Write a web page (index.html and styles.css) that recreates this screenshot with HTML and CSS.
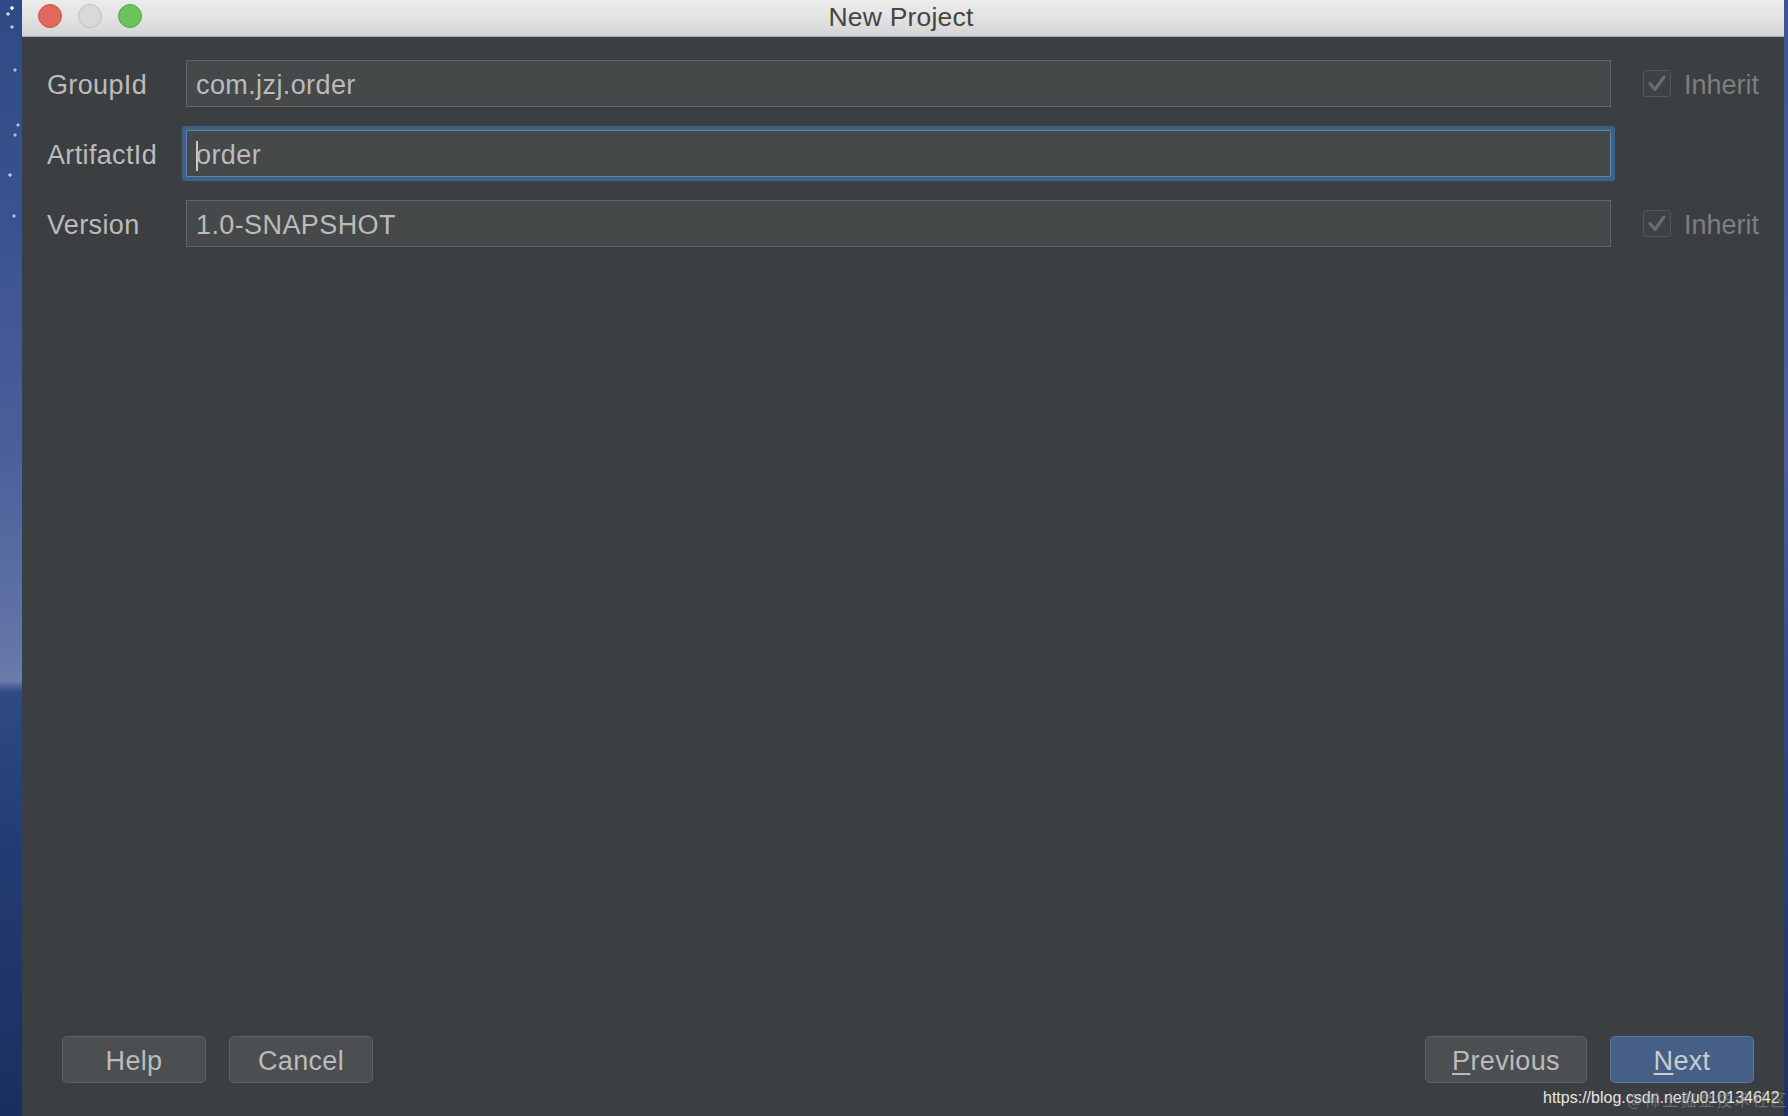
FILE: index.html
```html
<!DOCTYPE html>
<html>
<head>
<meta charset="utf-8">
<title>New Project</title>
<link rel="stylesheet" href="styles.css">
</head>
<body>
<div class="desktop">
  <div class="strip strip-left"></div>
  <div class="window">
    <div class="titlebar">
      <div class="lights">
        <span class="light red"></span>
        <span class="light gray"></span>
        <span class="light green"></span>
      </div>
      <div class="title">New Project</div>
    </div>
    <div class="content">
      <div class="form">
        <label class="label">GroupId</label>
        <div class="field">com.jzj.order</div>
        <div class="inherit">
          <span class="check"><svg viewBox="0 0 28 27" width="28" height="27"><path d="M7 13.5 L12 19.5 L21 7" fill="none" stroke="#6b6e70" stroke-width="3" stroke-linecap="round" stroke-linejoin="round"/></svg></span>
          <span class="inherit-text">Inherit</span>
        </div>

        <label class="label">ArtifactId</label>
        <div class="field focused"><span class="caret"></span>order</div>
        <div class="inherit empty"></div>

        <label class="label">Version</label>
        <div class="field">1.0-SNAPSHOT</div>
        <div class="inherit">
          <span class="check"><svg viewBox="0 0 28 27" width="28" height="27"><path d="M7 13.5 L12 19.5 L21 7" fill="none" stroke="#6b6e70" stroke-width="3" stroke-linecap="round" stroke-linejoin="round"/></svg></span>
          <span class="inherit-text">Inherit</span>
        </div>
      </div>

      <div class="footer">
        <div class="btn-group">
          <button class="btn">Help</button>
          <button class="btn">Cancel</button>
        </div>
        <div class="btn-group">
          <button class="btn wide"><u>P</u>revious</button>
          <button class="btn primary"><u>N</u>ext</button>
        </div>
      </div>
    </div>
  </div>
  <div class="strip strip-right"></div>
</div>
<div class="watermark">
  <span class="wm-url">https://blog.csdn.net/u010134642</span>
  <span class="wm-cn">@稀土掘金技术社区</span>
</div>
</body>
</html>
```

FILE: styles.css
```css
html, body {
  margin: 0;
  padding: 0;
  width: 1788px;
  height: 1116px;
  overflow: hidden;
  background: #1d2f5c;
  font-family: "Liberation Sans", Arial, sans-serif;
}

.desktop {
  display: flex;
  width: 1788px;
  height: 1116px;
}

.strip {
  flex: none;
}

.strip-left {
  width: 22px;
  background:
    radial-gradient(circle at 12px 8px, rgba(255,255,255,0.9) 0 1.5px, transparent 2px),
    radial-gradient(circle at 8px 14px, rgba(255,255,255,0.8) 0 1.3px, transparent 2px),
    radial-gradient(circle at 12px 27px, rgba(255,255,255,0.7) 0 1.2px, transparent 2px),
    radial-gradient(circle at 15px 70px, rgba(255,255,255,0.6) 0 1.2px, transparent 2px),
    radial-gradient(circle at 18px 125px, rgba(255,255,255,0.6) 0 1.2px, transparent 2px),
    radial-gradient(circle at 15px 135px, rgba(255,255,255,0.6) 0 1.2px, transparent 2px),
    radial-gradient(circle at 10px 175px, rgba(255,255,255,0.7) 0 1.3px, transparent 2px),
    radial-gradient(circle at 14px 216px, rgba(255,255,255,0.6) 0 1.2px, transparent 2px),
    linear-gradient(to bottom, #2f4a84 0%, #3a5390 20%, #4a5f9a 40%, #6375a6 58%, #6c7dab 61%, #2f4a84 62%, #233d74 75%, #1b2f5e 100%);
}

.strip-right {
  width: 4px;
  background: linear-gradient(to bottom, #3a5590 0%, #4a5f98 40%, #2a4478 70%, #1e3260 100%);
}

.window {
  flex: 1;
  display: flex;
  flex-direction: column;
  background: #3c3f41;
  min-width: 0;
}

.titlebar {
  flex: none;
  height: 36px;
  position: relative;
  display: flex;
  align-items: center;
  justify-content: center;
  background: linear-gradient(to bottom, #ececec 0%, #e3e3e3 50%, #d4d4d4 100%);
  border-bottom: 1px solid #a9a9a9;
}

.lights {
  position: absolute;
  left: 16px;
  top: 4px;
  display: flex;
  gap: 16px;
}

.light {
  width: 22px;
  height: 22px;
  border-radius: 50%;
  display: block;
}

.light.red {
  background: #e2685c;
  border: 1px solid #cc5446;
}

.light.gray {
  background: #d9d9d9;
  border: 1px solid #c0c0c0;
}

.light.green {
  background: #6cc25c;
  border: 1px solid #55a946;
}

.title {
  font-size: 26.5px;
  color: #454545;
  margin-left: -4px;
  margin-top: -2px;
  line-height: 30px;
  letter-spacing: 0.2px;
}

.content {
  flex: 1;
  display: flex;
  flex-direction: column;
  padding: 23px 25px 33px 25px;
}

.form {
  display: grid;
  grid-template-columns: 139px 1fr auto;
  grid-auto-rows: 47px;
  row-gap: 23px;
  align-items: center;
}

.label {
  font-size: 27px;
  color: #bbbbbb;
  line-height: 47px;
  padding-top: 4px;
  letter-spacing: 0.35px;
}

.field {
  height: 47px;
  box-sizing: border-box;
  border: 1px solid #646464;
  background: #45494a;
  color: #bbbbbb;
  font-size: 27px;
  line-height: 45px;
  padding-left: 9px;
  padding-top: 4px;
  display: flex;
  align-items: center;
  letter-spacing: 0.4px;
}

.field.focused {
  border: 1px solid #5b84b0;
  box-shadow: 0 0 0 4px #3e6287;
  border-radius: 1px;
}

.caret {
  display: inline-block;
  width: 2px;
  height: 30px;
  background: #c8c8c8;
  margin-right: -2px;
}

.inherit {
  display: flex;
  align-items: center;
  padding-left: 32px;
  height: 47px;
}

.inherit.empty {
  width: 1px;
}

.check {
  width: 28px;
  height: 27px;
  box-sizing: border-box;
  border: 1px solid #55585a;
  border-radius: 3px;
  background: #3f4244;
  display: flex;
  align-items: center;
  justify-content: center;
  position: relative;
}

.check svg {
  position: absolute;
  left: -1px;
  top: -1px;
}

.inherit-text {
  margin-left: 13px;
  font-size: 27px;
  color: #7c7e80;
  line-height: 47px;
  padding-top: 4px;
}

.footer {
  margin-top: auto;
  display: flex;
  justify-content: space-between;
  padding: 0 5px 0 15px;
}

.btn-group {
  display: flex;
  gap: 23px;
}

.btn {
  width: 144px;
  height: 47px;
  box-sizing: border-box;
  border: 1px solid #5e6163;
  border-radius: 5px;
  background: #4b4f51;
  color: #bbbbbb;
  font-family: "Liberation Sans", Arial, sans-serif;
  font-size: 27px;
  padding: 3px 0 0 0;
  line-height: 42px;
  letter-spacing: 0.35px;
}

.btn.wide {
  width: 162px;
}

.btn.primary {
  background: #455f87;
  border-color: #5878a3;
  color: #c9ccd0;
}

.btn u {
  text-decoration-thickness: 2px;
  text-underline-offset: 3px;
}

.watermark {
  position: absolute;
  left: 1543px;
  top: 1087px;
  width: 240px;
  height: 22px;
}

.wm-url {
  position: absolute;
  left: 0;
  top: 0;
  font-size: 16px;
  color: #e6e6e6;
  white-space: nowrap;
  line-height: 22px;
}

.wm-cn {
  position: absolute;
  left: 84px;
  top: 1px;
  font-family: "Noto Sans CJK SC", sans-serif;
  font-size: 16px;
  color: rgba(150,150,150,0.55);
  white-space: nowrap;
  line-height: 22px;
  letter-spacing: 2px;
}
```
